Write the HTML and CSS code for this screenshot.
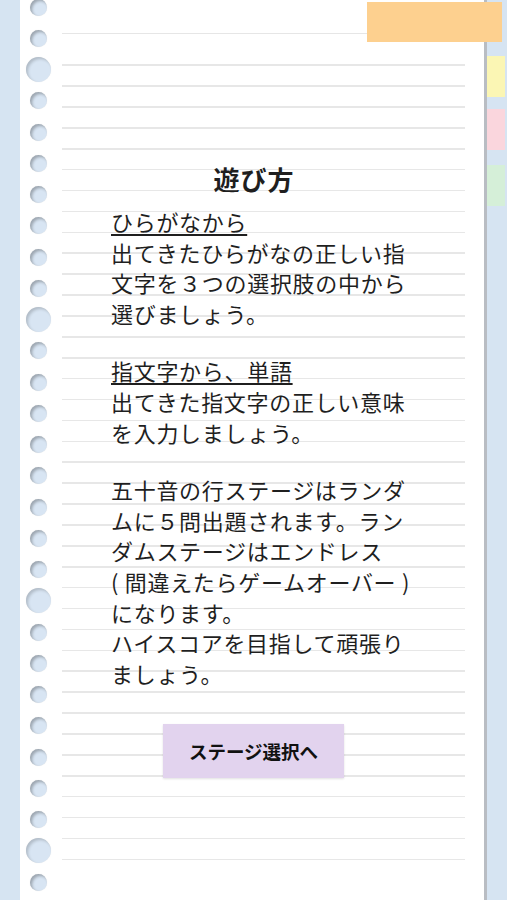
FILE: index.html
```html
<!DOCTYPE html>
<html lang="ja">
<head>
<meta charset="utf-8">
<title>遊び方</title>
<link rel="stylesheet" href="styles.css">
</head>
<body>
<div class="page">
  <div class="gutter"></div>
  <div class="paper">
    <div class="holes">
      <span class="hole"></span><span class="hole"></span><span class="hole big"></span><span class="hole"></span><span class="hole"></span><span class="hole"></span><span class="hole"></span><span class="hole"></span><span class="hole"></span><span class="hole"></span><span class="hole big"></span><span class="hole"></span><span class="hole"></span><span class="hole"></span><span class="hole"></span><span class="hole"></span><span class="hole"></span><span class="hole"></span><span class="hole"></span><span class="hole big"></span><span class="hole"></span><span class="hole"></span><span class="hole"></span><span class="hole"></span><span class="hole"></span><span class="hole"></span><span class="hole"></span><span class="hole big"></span><span class="hole"></span>
    </div>
    <div class="ruled">
      <div class="content">
        <h1 class="title">遊び方</h1>
        <p class="para"><span class="sub">ひらがなから</span><br>出てきたひらがなの正しい指文字を３つの選択肢の中から選びましょう。</p>
        <p class="para"><span class="sub">指文字から、単語</span><br>出てきた指文字の正しい意味を入力しましょう。</p>
        <p class="para">五十音の行ステージはランダムに５問出題されます。ランダムステージはエンドレス<br>( 間違えたらゲームオーバー )<br>になります。<br>ハイスコアを目指して頑張りましょう。</p>
      </div>
      <button class="btn" type="button">ステージ選択へ</button>
    </div>
  </div>
  <div class="tabs">
    <span class="tab yellow"></span>
    <span class="tab pink"></span>
    <span class="tab green"></span>
  </div>
  <div class="top-tag"></div>
</div>
</body>
</html>
```

FILE: styles.css
```css
* { box-sizing: border-box; }
html, body {
  margin: 0;
  padding: 0;
}
body {
  width: 507px;
  height: 900px;
  overflow: hidden;
  background: #d6e4f2;
  font-family: "Noto Sans CJK JP", "Noto Sans", sans-serif;
  color: #1f1f1f;
}
.page {
  position: relative;
  display: flex;
  height: 900px;
}
.gutter {
  width: 20px;
  flex: none;
}
.paper {
  width: 467px;
  flex: none;
  background: #ffffff;
  border-right: 3px solid #b9bdc3;
  display: flex;
  overflow: hidden;
}
.holes {
  width: 36px;
  flex: none;
  display: flex;
  flex-direction: column;
  margin-top: -8.6px;
}
.hole {
  height: 31.25px;
  flex: none;
  display: flex;
  align-items: center;
  justify-content: center;
}
.hole::before {
  content: "";
  width: 17px;
  height: 17px;
  border-radius: 50%;
  background: #d8e5f3;
  box-shadow: inset 2px 2px 3px rgba(0, 0, 0, 0.28), 0 0 1px rgba(0, 0, 0, 0.12);
}
.hole.big::before {
  width: 25px;
  height: 25px;
  box-shadow: inset 2px 2px 3px rgba(0, 0, 0, 0.18), 0 0 1px rgba(0, 0, 0, 0.1);
}
.ruled {
  margin-left: 6px;
  margin-top: 33px;
  width: 403px;
  height: 827px;
  border-top: 1.5px solid #e6e6e6;
  background:
    linear-gradient(#ffffff, #ffffff) 0 0 / 100% 20px no-repeat,
    repeating-linear-gradient(
      to bottom,
      transparent 0,
      transparent 9.5px,
      #e7e7e7 9.5px,
      #e7e7e7 11px,
      transparent 11px,
      transparent 20.9px
    );
  padding-top: 127px;
}
.content {
  margin-left: 49px;
  width: 300px;
}
.title {
  margin: 0 14px 0 0;
  font-size: 26px;
  line-height: 36px;
  font-weight: 700;
  text-align: center;
  letter-spacing: 1px;
}
.para {
  margin: 0;
  font-size: 22px;
  line-height: 30.6px;
  letter-spacing: 0.7px;
}
.title + .para {
  margin-top: 9px;
}
.para + .para {
  margin-top: 27px;
}
.sub {
  text-decoration: underline;
  text-decoration-thickness: 1.5px;
  text-underline-offset: 3px;
}
.btn {
  display: block;
  margin: 36px 0 0 101px;
  width: 181px;
  height: 54px;
  border: none;
  background: #e2d3ee;
  box-shadow: 0 1px 2px rgba(0, 0, 0, 0.12);
  font-family: "Noto Sans CJK JP", "Noto Sans", sans-serif;
  font-size: 18.5px;
  font-weight: 700;
  color: #111;
  padding: 0;
}
.tabs {
  width: 17px;
  padding-top: 56px;
  display: flex;
  flex-direction: column;
  gap: 12px;
}
.tab {
  display: block;
  width: 18px;
  height: 41px;
}
.tab.yellow { background: #fbf6b4; }
.tab.pink { background: #fad6dd; }
.tab.green { background: #d5efd8; margin-top: 3px; }
.top-tag {
  position: absolute;
  left: 367px;
  top: 2px;
  width: 135px;
  height: 40px;
  background: #fdd08f;
}
```
